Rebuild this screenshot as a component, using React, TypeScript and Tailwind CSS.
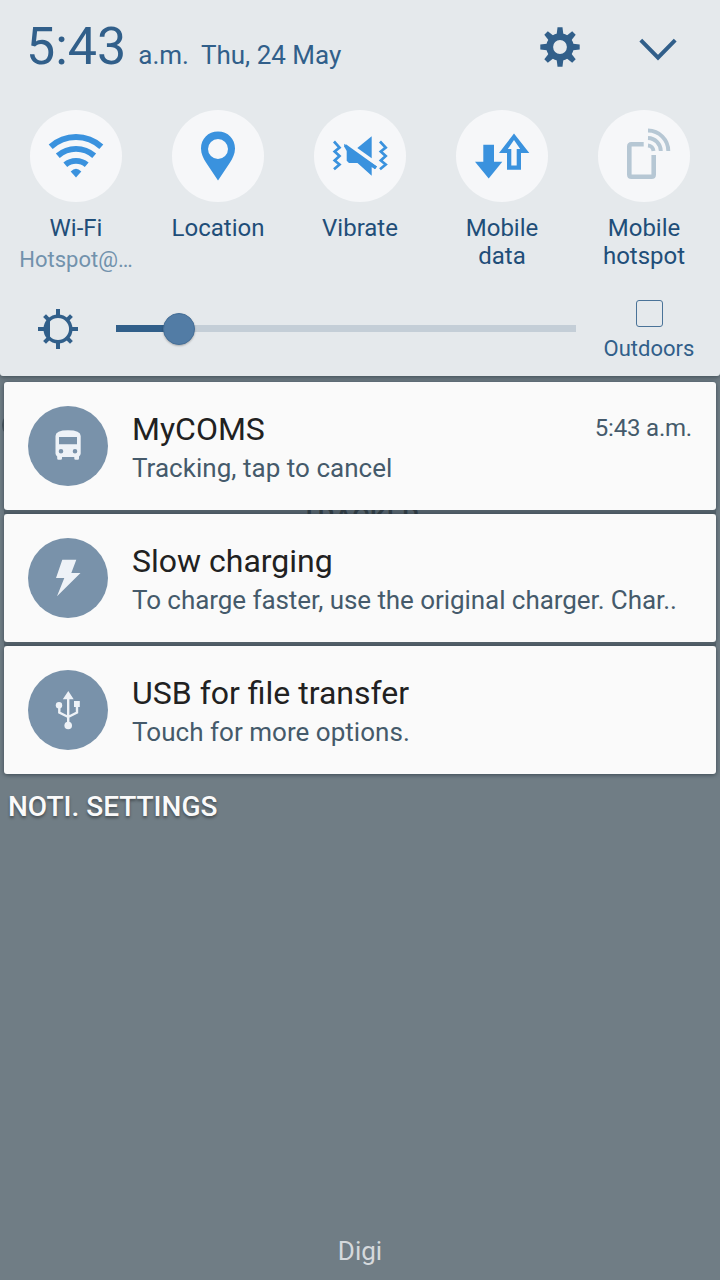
import type { ReactNode } from "react";

const BLUE = "#3a92de";

function Tile({ label, sub, icon }: { label: string; sub?: string; icon: ReactNode }) {
  return (
    <div className="flex flex-col items-center text-center">
      <div className="size-[92px] rounded-full bg-[#f6f7f9]">{icon}</div>
      <div className="mt-3 w-[100px] text-[24px] leading-7 text-[#1f4e79]">{label}</div>
      {sub && <div className="mt-1 text-[22px] leading-7 text-[#7292ac]">{sub}</div>}
    </div>
  );
}

const wifi = (
  <svg viewBox="30 110 92 92" className="size-full" fill="none" stroke={BLUE} strokeWidth="5.9">
    <path d="M50.700 146.800A37.500 37.500 0 0 1 101.300 146.800" />
    <path d="M57.800 155.800A27.500 27.500 0 0 1 94.200 155.800" />
    <path d="M65.300 164.800A16.500 16.500 0 0 1 86.700 164.800" />
    <path d="M70.700 171.500Q76 165.900 81.300 171.500L76 177.500Z" fill={BLUE} stroke="none" />
  </svg>
);

const pin = (
  <svg viewBox="172 110 92 92" className="size-full">
    <path
      fillRule="evenodd"
      fill={BLUE}
      d="M218 131.500C208 131.500 201 139 201 148.500C201 154 203.500 158.500 206 162.500L218 180.500L230 162.500C232.500 158.500 235 154 235 148.500C235 139 228 131.500 218 131.500ZM218 139A10 10 0 1 1 218 159A10 10 0 1 1 218 139Z"
    />
  </svg>
);

const vibrate = (
  <svg viewBox="314 110 92 92" className="size-full">
    <path d="M357.300 148L371.700 136.300V158.300Z" fill={BLUE} />
    <path d="M344.200 143.800L346 145.300L348 148L377 166.400L375 169.200L371.700 167V175.800L357.500 163H349L346.700 160.700V151L344.200 146.500Z" fill={BLUE} />
    <path d="M345 145.500L376 167.700" stroke={BLUE} strokeWidth="3.200" />
    <path d="M334 141.500L339.500 147.500L334.700 151.500L339.500 156L334.700 160.500L339.500 164.500L334 169.200M380 141.500L385.700 147.500L380.800 151.500L385.700 156L380.800 160.500L385.700 164.500L380 169.200" fill="none" stroke={BLUE} strokeWidth="2.700" />
  </svg>
);

const mobileData = (
  <svg viewBox="456 110 92 92" className="size-full" fill={BLUE}>
    <path d="M483.300 144.700H494V161.700H502.300L488.700 178.500L475 161.700H483.300Z" />
    <path fillRule="evenodd" d="M514 133.500L529.300 153H521V169.700H507V153H499ZM514 140L507.800 149H511.300V165.500H516.700V149H520.200Z" />
  </svg>
);

const hotspot = (
  <svg viewBox="598 110 92 92" className="size-full" fill="none" stroke="#b6c7d4" strokeWidth="4.600">
    <path d="M643.700 144.300H631.500Q629.300 144.300 629.300 146.500V174.500Q629.300 176.700 631.500 176.700H651.500Q653.700 176.700 653.700 174.500V155" />
    <path strokeWidth="3.900" d="M648 145.500A6 6 0 0 1 653.500 151M648 138A13.200 13.200 0 0 1 660.800 151M648 130.500A20.500 20.500 0 0 1 668.300 151" />
  </svg>
);

const busIcon = (
  <svg viewBox="28 406 80 80" className="size-full" fill="#eef2f7">
    <path
      fillRule="evenodd"
      d="M55.500 436Q55.500 430.300 68 430.300Q80.700 430.300 80.700 436V453.500Q80.700 455 79 456.500V458.500Q79 459.700 77.800 459.700H75.500Q74.300 459.700 74.300 458.500V457H62V458.500Q62 459.700 60.800 459.700H58.400Q57.200 459.700 57.200 458.500V456.500Q55.500 455 55.500 453.500ZM59 437V444.300H77V437ZM61 448.900A2.300 2.300 0 1 0 61 453.500A2.300 2.300 0 1 0 61 448.900ZM75 448.900A2.300 2.300 0 1 0 75 453.500A2.300 2.300 0 1 0 75 448.900Z"
    />
  </svg>
);

const boltIcon = (
  <svg viewBox="28 538 80 80" className="size-full" fill="#eef2f7">
    <path d="M62.300 559.700H76.300L71.300 573H80.500L57 596.300L64.300 578H56Z" />
  </svg>
);

const usbIcon = (
  <svg viewBox="28 670 80 80" className="size-full" fill="#eef2f7">
    <path d="M68.300 691L73.700 699.300H62.800ZM74 701H79.800V707H74Z" />
    <circle cx="59" cy="705.200" r="3.200" />
    <circle cx="68.200" cy="725.500" r="3.800" />
    <path d="M68.200 697V724M59.300 705V712.500L68.200 717L77 712.500V705" fill="none" stroke="#eef2f7" strokeWidth="2.400" />
  </svg>
);

function Card({ icon, title, text, time }: { icon: ReactNode; title: string; text: string; time?: string }) {
  return (
    <article className="flex h-32 rounded-[3px] bg-[#fafafa] px-6 pt-6 shadow-[0_1px_4px_rgba(25,38,48,0.6)]">
      <div className="size-20 shrink-0 rounded-full bg-[#7992aa]">{icon}</div>
      <div className="ml-6 min-w-0 flex-1 pt-1">
        <div className="flex justify-between">
          <h2 className="text-[32px] leading-[38px] text-[#212121]">{title}</h2>
          {time && <time className="text-[24px] leading-9 tracking-[-0.2px] text-[#455a6b]">{time}</time>}
        </div>
        <p className={`mt-[2px] whitespace-nowrap text-[26px] leading-9 text-[#455a6b] ${text.length > 40 ? "tracking-[-0.06px]" : "tracking-[0.03px]"}`}>
          {text}
        </p>
      </div>
    </article>
  );
}

const rays = [0, 45, 90, 135, 180, 225, 270, 315];

export default function App() {
  return (
    <div className="relative flex h-[1280px] w-[720px] flex-col overflow-hidden bg-[#707d85] font-[Roboto,sans-serif]">
      <div className="absolute left-[2px] top-[414px] h-[22px] w-5 rounded-full bg-[#4b5860]" />
      <header className="h-[376px] shrink-0 rounded-b-[3px] bg-[#e5e9ec] text-[#315f8a] shadow-[0_1px_5px_rgba(25,38,48,0.6)]">
        <div className="flex h-[110px] pl-[26px]">
          <div className="flex flex-1 items-baseline pt-[17px]">
            <span className="text-[52px] leading-[60px]">5:43</span>
            <span className="ml-3 text-[26px]">a.m.</span>
            <span className="ml-3 text-[26px]">Thu, 24 May</span>
          </div>
          <svg viewBox="540 27 40 40" className="mt-[27px] size-10" fill="#315f8a">
            {rays.map((a) => (
              <path key={a} transform={`rotate(${a} 560 47)`} d="M557.500 27.300H562.500L563.500 36H556.500Z" />
            ))}
            <circle cx="560" cy="47" r="10.300" fill="none" stroke="#315f8a" strokeWidth="6.800" />
          </svg>
          <svg viewBox="636 27 44 40" className="ml-14 mr-10 mt-[27px] h-10 w-11" fill="none" stroke="#315f8a" strokeWidth="4">
            <path d="M640.800 40.200L658 57.700L675.200 40.200" />
          </svg>
        </div>

        <div className="grid h-[180px] grid-cols-5 px-[5px]">
          <Tile label="Wi-Fi" sub="Hotspot@…" icon={wifi} />
          <Tile label="Location" icon={pin} />
          <Tile label="Vibrate" icon={vibrate} />
          <Tile label="Mobile data" icon={mobileData} />
          <Tile label="Mobile hotspot" icon={hotspot} />
        </div>

        <div className="flex items-start pl-[38px]">
          <svg viewBox="38 309 40 40" className="mt-[19px] size-10" fill="none" stroke="#315f8a" strokeWidth="4">
            {rays.map((a) => (
              <path key={a} transform={`rotate(${a} 58 329)`} d={a % 90 ? "M58 310V316" : "M58 309V316"} />
            ))}
            <circle cx="58" cy="329" r="12.800" strokeWidth="3.500" />
            <path d="M50 319V339Q46 335 45.500 329Q46 323 50 319Z" fill="#315f8a" stroke="none" />
          </svg>
          <div className="ml-[38px] mt-[23px] flex h-8 w-[460px] items-start">
            <div className="mt-3 h-[7px] w-[49px] bg-[#315f8a]" />
            <div className="z-10 -ml-[2px] size-8 rounded-full border border-[#456f98] bg-[#527ca5] shadow-[0_1px_2px_rgba(0,0,0,0.25)]" />
            <div className="-ml-px mt-3 h-[7px] flex-1 bg-[#c4ced7]" />
          </div>
          <div className="ml-[13px] flex w-[120px] flex-col items-center pt-[10px]">
            <div className="size-[27px] rounded-[3px] border-[1.500px] border-[#4a7398]" />
            <div className="mt-2 text-[22px] leading-7">Outdoors</div>
          </div>
        </div>
      </header>

      <main className="relative mt-[6px] flex flex-col px-1">
        <Card icon={busIcon} title="MyCOMS" text="Tracking, tap to cancel" time="5:43 a.m." />
        <div className="flex h-1 justify-center overflow-hidden bg-[#54616a] text-[27px] font-medium leading-none text-[#303c44]">
          <span className="-mt-[5px]">TRACKER</span>
        </div>
        <Card icon={boltIcon} title="Slow charging" text="To charge faster, use the original charger. Char.." />
        <div className="h-1 bg-[#54616a]" />
        <Card icon={usbIcon} title="USB for file transfer" text="Touch for more options." />
        <button className="ml-1 mt-[15px] self-start text-[28px] font-medium leading-9 text-[#fafafa] [text-shadow:0_2px_3px_rgba(0,0,0,0.4)]">
          NOTI. SETTINGS
        </button>
      </main>
      <footer className="mb-[11px] mt-auto text-center text-[26px] leading-9 text-[#d5d9dc]">Digi</footer>
    </div>
  );
}
